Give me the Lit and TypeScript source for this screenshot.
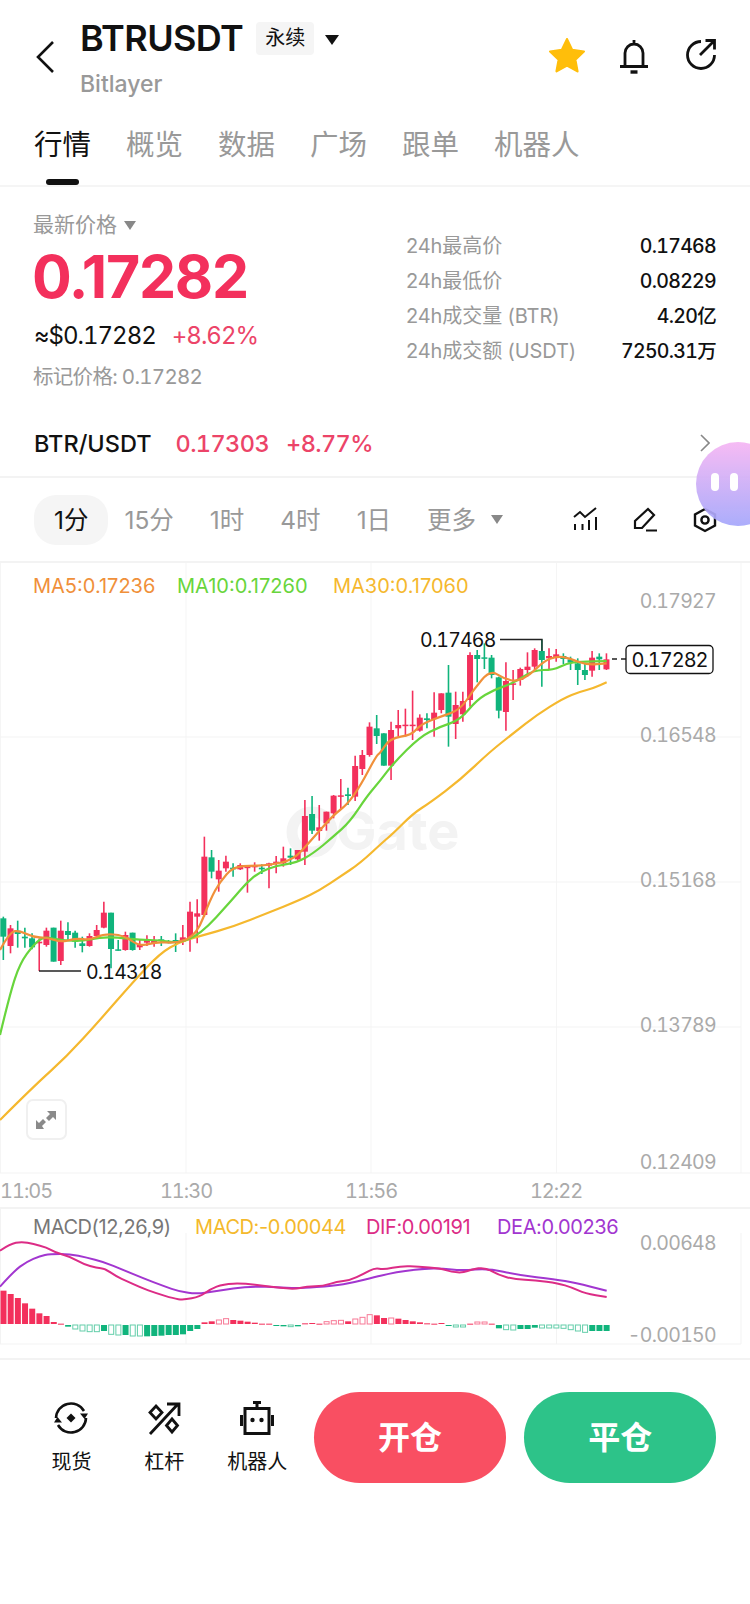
import {LitElement, css, html, svg, unsafeCSS} from "lit";
import {customElement} from "lit/decorators.js";

const RED = "#f3305c";
const GREEN = "#10b47c";
const MA5 = "#f0903a";
const MA10 = "#68d53c";
const MA30 = "#f5b82e";
const DIF = "#dc2c86";
const DEA = "#a236d0";

type Pt = [number, number];
// kind, body top, body bottom, wick top, wick bottom
type Candle = ["r" | "g", number, number, number, number];

/** Zoomed-in chart readings back to page pixels. */
const at =
	(ox: number, oy: number) =>
	(pts: Pt[]): Pt[] =>
		pts.map(([x, y]) => [ox + x / 3, oy + y / 3]);

const seg = (oy: number, rows: Candle[]): Candle[] =>
	rows.map(([k, a, b, c, d]) => [k, oy + a / 3, oy + b / 3, oy + c / 3, oy + d / 3]);

const candles: Candle[] = [
	...seg(860, [
		["g", 175, 230, 170, 300],
		["r", 205, 258, 195, 280],
		["g", 212, 222, 182, 263],
		["g", 230, 235, 203, 263],
		["g", 235, 262, 220, 268],
		["r", 245, 250, 235, 333],
		["r", 212, 255, 203, 260],
		["g", 203, 305, 203, 305],
		["r", 212, 303, 182, 315],
		["g", 213, 225, 187, 240],
		["g", 218, 245, 212, 263],
		["g", 250, 258, 230, 277],
		["r", 228, 258, 220, 260],
		["r", 210, 228, 195, 232],
		["r", 158, 203, 125, 205],
		["g", 158, 267, 158, 325],
		["g", 268, 272, 240, 272],
		["r", 225, 270, 215, 272],
		["g", 218, 270, 218, 272],
		["r", 253, 262, 240, 270],
		["r", 240, 248, 226, 258],
		["r", 240, 250, 228, 260],
		["g", 238, 243, 228, 258],
		["g", 245, 247, 240, 250],
		["g", 240, 245, 220, 276],
		["r", 232, 245, 195, 255],
		["r", 155, 235, 125, 275],
		["r", 160, 170, 118, 250],
	]),
	...seg(700, [
		["r", 470, 645, 410, 650],
		["g", 472, 515, 450, 535],
		["r", 512, 538, 480, 575],
		["r", 485, 505, 467, 515],
		["g", 503, 508, 490, 530],
		["r", 495, 508, 490, 510],
		["r", 500, 503, 500, 578],
		["r", 497, 502, 487, 515],
		["g", 503, 508, 493, 522],
		["r", 490, 497, 488, 565],
		["r", 485, 490, 468, 520],
		["r", 475, 490, 440, 500],
		["g", 467, 473, 445, 495],
		["r", 450, 478, 450, 482],
		["r", 348, 455, 300, 495],
		["g", 342, 392, 288, 402],
		["r", 382, 393, 315, 422],
		["r", 335, 370, 335, 392],
		["r", 287, 340, 285, 355],
		["r", 286, 290, 237, 328],
		["g", 283, 288, 263, 315],
		["r", 198, 290, 167, 303],
		["r", 165, 207, 150, 225],
		["r", 80, 165, 67, 170],
		["g", 85, 108, 45, 132],
	]),
	...seg(620, [
		["g", 340, 437, 340, 437],
		["r", 330, 437, 305, 480],
		["r", 315, 325, 270, 350],
		["r", 314, 316, 266, 350],
		["r", 314, 316, 212, 360],
		["r", 293, 332, 283, 335],
		["g", 295, 300, 280, 325],
		["r", 278, 297, 217, 350],
		["r", 220, 270, 220, 280],
		["g", 218, 290, 135, 380],
		["r", 255, 312, 215, 357],
		["r", 243, 283, 215, 305],
		["r", 105, 240, 97, 260],
		["g", 105, 117, 90, 187],
		["g", 112, 116, 70, 147],
		["g", 113, 165, 105, 175],
		["g", 172, 272, 170, 295],
		["r", 183, 276, 127, 332],
		["r", 190, 193, 150, 240],
		["r", 147, 180, 143, 197],
		["r", 140, 150, 97, 170],
		["r", 90, 140, 85, 150],
		["g", 93, 120, 58, 200],
		["r", 108, 115, 85, 150],
		["r", 103, 112, 87, 125],
		["g", 108, 117, 100, 132],
		["g", 118, 128, 110, 150],
		["g", 130, 150, 115, 195],
		["g", 150, 165, 130, 180],
		["r", 113, 152, 93, 170],
		["g", 110, 118, 100, 150],
		["r", 118, 148, 100, 150],
	]),
];

const low = at(0, 860);
const mid = at(170, 700);
const top = at(380, 620);

const ma30Line: Pt[] = [
	...low([[0, 780], [100, 680], [200, 590], [300, 480], [400, 365], [480, 280], [540, 245], [600, 228], [700, 200], [800, 160], [900, 120]]),
	...mid([[450, 570], [510, 530], [570, 490], [640, 425]]),
	...top([[40, 640], [100, 580], [150, 548], [240, 480], [330, 395], [400, 340], [470, 285], [550, 235], [600, 215], [640, 205], [680, 187]]),
];
const ma10Line: Pt[] = [
	...low([[0, 525], [30, 400], [60, 310], [100, 255], [130, 230], [170, 238], [240, 245], [300, 232], [350, 232], [420, 240], [480, 240], [530, 250], [600, 225]]),
	...mid([[186, 600], [230, 548], [270, 515], [320, 497], [380, 488], [430, 460], [490, 410], [540, 365], [590, 290]]),
	...top([[0, 483], [40, 430], [120, 350], [180, 320], [240, 300], [290, 240], [340, 210], [400, 190], [460, 150], [520, 150], [560, 130], [600, 125], [680, 123]]),
];
const ma5Line: Pt[] = [
	...low([[0, 270], [30, 215], [60, 212], [100, 232], [140, 232], [180, 247], [230, 235], [270, 240], [310, 222], [370, 225], [420, 260], [470, 245], [530, 250], [590, 225]]),
	...mid([[120, 600], [150, 545], [190, 500], [250, 497], [300, 495], [370, 480], [420, 425], [490, 345], [530, 315], [570, 260], [620, 165]]),
	...top([[0, 400], [30, 355], [95, 345], [120, 315], [180, 290], [240, 270], [280, 210], [330, 150], [370, 175], [410, 185], [450, 165], [490, 125], [530, 108], [570, 115], [620, 135], [680, 130]]),
];

const macdTop = at(0, 1200);
const macdRest = at(375, 1200);
const difLine: Pt[] = [
	...macdTop([[0, 152], [30, 132], [65, 125], [100, 132], [140, 142], [165, 157], [210, 170], [250, 192], [290, 204], [315, 206], [350, 230], [380, 243], [420, 262], [470, 280], [520, 295], [550, 300], [600, 290], [630, 268], [670, 252], [730, 250], [800, 259], [880, 268], [920, 260], [970, 258], [1010, 245], [1050, 241], [1090, 222]]),
	...macdRest([[0, 203], [25, 209], [80, 198], [130, 200], [195, 205], [230, 216], [265, 218], [290, 208], [330, 202], [370, 225], [420, 238], [480, 240], [550, 250], [590, 262], [630, 280], [695, 291]]),
];
const deaLine: Pt[] = [
	...macdTop([[0, 260], [40, 215], [80, 185], [120, 168], [150, 162], [210, 162], [260, 173], [310, 185], [370, 210], [430, 235], [490, 258], [540, 275], [590, 282], [650, 273], [750, 258], [850, 263], [900, 265], [1000, 257], [1060, 248]]),
	...macdRest([[0, 231], [40, 222], [90, 212], [150, 206], [200, 205], [260, 212], [340, 205], [430, 225], [540, 238], [600, 248], [695, 272]]),
];

// histogram height in zoomed px (sign: up is red), second value = hollow
const hist: [number, boolean?][] = [
	[100], [90], [78], [62], [46], [32], [24], [6], [1], [-5], [-12, true], [-18, true], [-20, true], [-20, true], [-18], [-28, true], [-30, true], [-30], [-33, true], [-33, true], [-34], [-33], [-32], [-30], [-30], [-28], [-18], [-12],
	[5], [8], [12, true], [16, true], [12], [10], [7], [4], [1], [1], [-3], [-4], [-5, true], [-4], [2], [3], [1], [7, true], [10, true], [11, true], [8], [15, true], [20, true], [28, true],
	[26], [18], [18, true], [16], [12], [8], [5], [2], [1], [3], [-3], [-6, true], [-6, true], [1], [6, true], [6, true], [1], [-10], [-14, true], [-15, true], [-12], [-12], [-8], [-9, true], [-9, true], [-9, true], [-10, true], [-14, true], [-18, true], [-22, true], [-18], [-18], [-18],
];

/** Midpoint-smoothed path through the readings. */
const smooth = (pts: Pt[]) => {
	let d = `M${pts[0][0]} ${pts[0][1]}`;
	for (let i = 1; i < pts.length - 1; i++) {
		const mx = (pts[i][0] + pts[i + 1][0]) / 2;
		const my = (pts[i][1] + pts[i + 1][1]) / 2;
		d += `Q${pts[i][0]} ${pts[i][1]} ${mx} ${my}`;
	}
	const end = pts[pts.length - 1];
	return d + `L${end[0]} ${end[1]}`;
};

const stats = [
	["24h最高价", "0.17468"],
	["24h最低价", "0.08229"],
	["24h成交量 (BTR)", "4.20亿"],
	["24h成交额 (USDT)", "7250.31万"],
];

@customElement("app-root")
export class AppRoot extends LitElement {
	static styles = css`
		:host {
			display: block;
			position: relative;
			width: 750px;
			height: 1604px;
			overflow: hidden;
			background: #fff;
			color: #111;
			font-family: Inter, "Noto Sans CJK SC", sans-serif;
		}

		svg {
			display: block;
		}

		.header {
			display: flex;
			height: 110px;
			padding: 0 33px 0 36px;
			box-sizing: border-box;
		}

		.back {
			margin: 41px 26px 0 0;
		}

		.names {
			flex: 1;
			padding-top: 20px;
		}

		.title-row {
			display: flex;
			align-items: center;
			height: 36px;
		}

		.title {
			font-size: 36px;
			font-weight: 600;
			letter-spacing: -0.6px;
			line-height: 36px;
		}

		.badge {
			margin-left: 13px;
			padding: 0 9px;
			height: 33px;
			line-height: 33px;
			border-radius: 4px;
			background: #f5f5f5;
			font-size: 20px;
		}

		.drop {
			margin: 4px 0 0 11px;
			border-style: solid;
			border-width: 10px 7px 0;
			border-color: #111 transparent transparent;
		}

		.chain {
			margin-top: 13px;
			color: #999;
			font-size: 23px;
			font-weight: 500;
			line-height: 30px;
		}

		.actions {
			display: flex;
			gap: 33px;
			padding-top: 38px;
			align-items: flex-start;
		}

		.bell {
			margin-right: 2px;
		}

		.tabs {
			display: flex;
			gap: 35px;
			padding: 15px 34px 0;
			border-bottom: 2px solid #f5f5f5;
		}

		.tab {
			display: flex;
			flex-direction: column;
			align-items: center;
			color: #999;
			font-size: 28.5px;
			line-height: 40px;
		}

		.tab.on {
			color: #111;
		}

		.tab i {
			width: 33px;
			height: 6px;
			margin-top: 14px;
			border-radius: 3px;
		}

		.tab.on i {
			background: #111;
		}

		.overview {
			display: flex;
			justify-content: space-between;
			padding: 24px 34px 0;
		}

		.price-label {
			display: flex;
			align-items: center;
			margin-left: -1px;
			color: #999;
			font-size: 21px;
			line-height: 28px;
		}

		.small-drop {
			margin-left: 7px;
			border-style: solid;
			border-width: 9px 6.5px 0;
			border-color: #888 transparent transparent;
		}

		.price {
			margin: 4px 0 0 -2px;
			color: ${unsafeCSS(RED)};
			font-size: 59px;
			font-weight: 700;
			letter-spacing: -1.3px;
			line-height: 68px;
		}

		.fiat {
			display: flex;
			gap: 16px;
			margin-top: 10px;
			font-size: 24px;
			font-variant-numeric: tabular-nums;
			letter-spacing: -1px;
			line-height: 30px;
		}

		.up {
			color: #ec4468;
		}

		.mark {
			margin: 12px 0 0 -1px;
			color: #999;
			font-size: 20.5px;
			font-variant-numeric: tabular-nums;
			letter-spacing: -0.7px;
			line-height: 28px;
		}

		.stats {
			width: 310px;
			margin-top: 18px;
		}

		.stat {
			display: flex;
			justify-content: space-between;
			font-size: 20px;
			line-height: 35px;
		}

		.stat span {
			color: #999;
			letter-spacing: -0.1px;
		}

		.stat b {
			font-size: 19.5px;
			font-variant-numeric: tabular-nums;
			font-weight: 500;
			letter-spacing: -0.7px;
		}

		.pair {
			display: flex;
			align-items: center;
			height: 60px;
			margin: 22px 0 3px;
			padding: 0 40px 0 34px;
			font-size: 23.5px;
			font-weight: 500;
		}

		.pair .up {
			font-variant-numeric: tabular-nums;
			letter-spacing: -0.6px;
		}

		.pair-price {
			margin-left: 24px;
		}

		.pair-change {
			margin-left: 17px;
			flex: 1;
		}

		.frames {
			display: flex;
			align-items: center;
			height: 87px;
			padding: 0 33px 0 34px;
			box-sizing: border-box;
			border-top: 2px solid #f3f3f3;
			border-bottom: 2px solid #f3f3f3;
		}

		.frame {
			padding: 0 18px;
			color: #999;
			font-size: 24.5px;
			line-height: 50px;
		}

		.frame.on {
			margin-right: -2px;
			padding: 0 20px;
			border-radius: 22px;
			background: #f5f5f5;
			color: #111;
		}

		.more {
			display: flex;
			align-items: center;
			gap: 8px;
		}

		.tools {
			display: flex;
			gap: 36px;
			margin-left: auto;
		}

		.macd {
			border-top: 2px solid #f3f3f3;
			border-bottom: 2px solid #f3f3f3;
		}

		.axis {
			fill: #aaa;
			font-size: 19.5px;
			font-variant-numeric: tabular-nums;
			letter-spacing: -0.7px;
		}

		.time {
			fill: #aaa;
			font-size: 20px;
			font-variant-numeric: tabular-nums;
			letter-spacing: -1px;
		}

		.legend {
			font-size: 20px;
		}

		.legend.tight {
			letter-spacing: -0.4px;
		}

		.mark-label {
			fill: #111;
			font-size: 19.5px;
			font-variant-numeric: tabular-nums;
			letter-spacing: -0.8px;
		}

		.last {
			fill: #111;
			font-size: 20px;
			font-variant-numeric: tabular-nums;
			letter-spacing: -1px;
		}

		.wm {
			fill: #f3f3f3;
			font-size: 54px;
			font-weight: 700;
		}

		.bottom {
			display: flex;
			padding: 32px 34px 0 25px;
		}

		.tool {
			display: flex;
			flex-direction: column;
			align-items: center;
			width: 93px;
			padding-top: 8px;
			font-size: 20px;
			line-height: 28px;
		}

		.tool span {
			margin-top: 12px;
		}

		.trade {
			width: 193px;
			height: 91px;
			border-radius: 46px;
			color: #fff;
			font-size: 32px;
			font-weight: 700;
			line-height: 91px;
			text-align: center;
		}

		.open {
			margin-left: 10px;
			background: #f94f62;
		}

		.close {
			width: 192px;
			margin-left: 18px;
			background: #2dc389;
		}

		.bubble {
			position: absolute;
			top: 442px;
			left: 696px;
			display: flex;
			gap: 11px;
			width: 84px;
			height: 84px;
			padding: 31px 0 0 15px;
			box-sizing: border-box;
			border-radius: 50%;
			background: linear-gradient(#f6b6f4, #a4a6fb);
			opacity: 0.92;
		}

		.bubble i {
			width: 8px;
			height: 18px;
			border-radius: 4px;
			background: #fff;
		}
	`;

	private chartLayer() {
		const gridX = [0.5, 186, 371, 556.5, 741];
		const gridY = [737, 882, 1027];
		return svg`
			${gridX.map((x) => svg`<line x1=${x} x2=${x} y1="563" y2="1173" stroke="#f5f5f5" stroke-width="1"></line>`)}
			${gridY.map((y) => svg`<line x1="0" x2="741" y1=${y} y2=${y} stroke="#f3f3f3" stroke-width="1"></line>`)}
			<line x1="0" x2="750" y1="1173" y2="1173" stroke="#f3f3f3" stroke-width="1"></line>

			<circle cx="312" cy="832" r="20" fill="none" stroke="#f3f3f3" stroke-width="11"></circle>
			<text class="wm" x="336" y="850">Gate</text>

			${candles.map(([k, a, b, c, d], i) => {
				const x = 3.33 + 7.18 * i;
				const color = k === "r" ? RED : GREEN;
				return svg`
					<line x1=${x} x2=${x} y1=${c} y2=${d} stroke=${color} stroke-width="1.6"></line>
					<rect x=${x - 3} y=${a} width="6" height=${Math.max(b - a, 1.5)} fill=${color}></rect>`;
			})}

			<path d=${smooth(ma30Line)} fill="none" stroke=${MA30} stroke-width="2.2"></path>
			<path d=${smooth(ma10Line)} fill="none" stroke=${MA10} stroke-width="2.2"></path>
			<path d=${smooth(ma5Line)} fill="none" stroke=${MA5} stroke-width="2.2"></path>

			<text class="legend" x="33" y="593" fill=${MA5}>MA5:0.17236</text>
			<text class="legend" x="177" y="593" fill=${MA10}>MA10:0.17260</text>
			<text class="legend" x="333" y="593" fill=${MA30}>MA30:0.17060</text>

			${[["0.17927", 608], ["0.16548", 742], ["0.15168", 887], ["0.13789", 1032], ["0.12409", 1169]].map(
				([t, y]) => svg`<text class="axis" x="716" y=${y} text-anchor="end">${t}</text>`,
			)}
			${[["11:05", 0, "start"], ["11:30", 186, "middle"], ["11:56", 371, "middle"], ["12:22", 556, "middle"]].map(
				([t, x, anchor]) => svg`<text class="time" x=${x} y="1198" text-anchor=${anchor}>${t}</text>`,
			)}

			<path d="M500 639.5H542V651" fill="none" stroke="#222" stroke-width="1.3"></path>
			<text class="mark-label" x="420" y="647">0.17468</text>
			<path d="M39 971H81" fill="none" stroke="#222" stroke-width="1.3"></path>
			<text class="mark-label" x="86" y="979">0.14318</text>

			<path d="M612 659H626" stroke="#222" stroke-width="1.3" stroke-dasharray="5 4"></path>
			<rect x="626" y="645.5" width="87" height="28" rx="4" fill="#fff" stroke="#111" stroke-width="1.3"></rect>
			<text class="last" x="669.5" y="667" text-anchor="middle">0.17282</text>

			<rect x="27" y="1100" width="39" height="39" rx="6" fill="#fff" stroke="#f0f0f0" stroke-width="2"></rect>
			<path d="M47 1111h9v9l-3-3-4 4-3-3 4-4zM44 1129h-8v-9l3 3 4-4 3 3-4 4z" fill="#8a8a8a"></path>
		`;
	}

	private macdLayer() {
		return svg`
			${[186, 371, 556.5, 741].map((x) => svg`<line x1=${x} x2=${x} y1="1233" y2="1344" stroke="#f3f3f3"></line>`)}
			<line x1="0.5" x2="0.5" y1="1209" y2="1344" stroke="#f3f3f3"></line>
			<line x1="0" x2="741" y1="1344" y2="1344" stroke="#f3f3f3"></line>

			<text class="legend tight" x="33" y="1234" fill="#777">MACD(12,26,9)</text>
			<text class="legend tight" x="195" y="1234" fill="#f4b92c">MACD:-0.00044</text>
			<text class="legend tight" x="366" y="1234" fill=${DIF}>DIF:0.00191</text>
			<text class="legend tight" x="497" y="1234" fill=${DEA}>DEA:0.00236</text>
			<text class="axis" x="716" y="1250" text-anchor="end">0.00648</text>
			<text class="axis" x="716" y="1342" text-anchor="end">-0.00150</text>

			${hist.map(([h, hollow], i) => {
				const x = 0.5 + 7.18 * i;
				const ht = Math.abs(h) / 3;
				const y = h > 0 ? 1324 - ht : 1325;
				const color = h > 0 ? RED : GREEN;
				return hollow
					? svg`<rect x=${x + 0.5} y=${y} width="5" height=${ht} fill="#fff" stroke=${color} stroke-opacity="0.65" stroke-width="1"></rect>`
					: svg`<rect x=${x} y=${y} width="6" height=${Math.max(ht, 1)} fill=${color}></rect>`;
			})}

			<path d=${smooth(deaLine)} fill="none" stroke=${DEA} stroke-width="2"></path>
			<path d=${smooth(difLine)} fill="none" stroke=${DIF} stroke-width="2"></path>
		`;
	}

	render() {
		return html`
			<div class="header">
				<svg class="back" width="18" height="32" viewBox="0 0 18 32" fill="none" stroke="#111" stroke-width="2.6">
					<path d="M17 1 2 16l15 15"></path>
				</svg>
				<div class="names">
					<div class="title-row">
						<div class="title">BTRUSDT</div>
						<div class="badge">永续</div>
						<div class="drop"></div>
					</div>
					<div class="chain">Bitlayer</div>
				</div>
				<div class="actions">
					<svg width="36" height="36" viewBox="2 2 32 32">
						<path
							d="M18 3l4.6 9.6 10.4 1.4-7.6 7.2 1.9 10.4-9.3-5.1-9.3 5.1 1.9-10.4L3 14l10.4-1.4z"
							fill="#ffbe0a"
							stroke="#ffbe0a"
							stroke-width="2"
							stroke-linejoin="round"></path>
					</svg>
					<svg class="bell" width="32" height="36" viewBox="0 0 32 36" fill="none" stroke="#111" stroke-width="2.8">
						<path d="M7 28V15a9 9 0 0 1 18 0v13M2 28.5h28M16 2v4"></path>
						<path d="M12.5 34h7" stroke-width="3.4"></path>
					</svg>
					<svg width="32" height="32" viewBox="0 0 32 32" fill="none" stroke="#111" stroke-width="2.8">
						<path d="M16 3.5A13.5 13.5 0 1 0 29.5 17M15 17 29 3M20.5 2.5h9v9"></path>
					</svg>
				</div>
			</div>

			<div class="tabs">
				${["行情", "概览", "数据", "广场", "跟单", "机器人"].map(
					(t, i) => html`<div class="tab ${i === 0 ? "on" : ""}">${t}<i></i></div>`,
				)}
			</div>

			<div class="overview">
				<div>
					<div class="price-label">最新价格<span class="small-drop"></span></div>
					<div class="price">0.17282</div>
					<div class="fiat">≈$0.17282 <span class="up">+8.62%</span></div>
					<div class="mark">标记价格: 0.17282</div>
				</div>
				<div class="stats">
					${stats.map(([k, v]) => html`<div class="stat"><span>${k}</span><b>${v}</b></div>`)}
				</div>
			</div>

			<div class="pair">
				BTR/USDT
				<span class="up pair-price">0.17303</span>
				<span class="up pair-change">+8.77%</span>
				<svg width="10" height="18" viewBox="0 0 10 18" fill="none" stroke="#888" stroke-width="1.6">
					<path d="M1 1l8 8-8 8"></path>
				</svg>
			</div>

			<div class="frames">
				<div class="frame on">1分</div>
				<div class="frame">15分</div>
				<div class="frame">1时</div>
				<div class="frame">4时</div>
				<div class="frame">1日</div>
				<div class="frame more">更多<span class="small-drop"></span></div>
				<div class="tools">
					<svg width="24" height="24" viewBox="0 0 24 24" fill="none" stroke="#111" stroke-width="2">
						<path d="M1 10l6-5 5 5L23 1M2 17v6M9.5 17v6M16 13v10M23 10v13"></path>
					</svg>
					<svg width="24" height="25" viewBox="0 0 24 25" fill="none" stroke="#111" stroke-width="2.2">
						<path d="M15 2l6 6L9 21H2v-7zM13 23.5h11"></path>
					</svg>
					<svg width="24" height="26" viewBox="0 0 24 26" fill="none" stroke="#111" stroke-width="2.4">
						<path d="M12 2l10 5.5v11L12 24 2 18.5v-11z"></path>
						<circle cx="12" cy="13" r="3.6"></circle>
					</svg>
				</div>
			</div>

			<svg width="750" height="644" viewBox="0 563 750 644">${this.chartLayer()}</svg>

			<div class="macd">
				<svg width="750" height="149" viewBox="0 1209 750 149">${this.macdLayer()}</svg>
			</div>

			<div class="bottom">
				<div class="tool">
					<svg width="36" height="36" viewBox="0 0 36 36" fill="none" stroke="#111" stroke-width="2.6">
						<path d="M3 18a15 15 0 0 1 28-7M33 18a15 15 0 0 1-28 7"></path>
						<path d="M31.5 19 35 13.5h-8zM4.5 17 1 22.5h8z" fill="#111" stroke="none"></path>
						<path d="M18 13.5l4.5 4.5-4.5 4.5-4.5-4.5z" fill="#111" stroke="none"></path>
					</svg>
					<span>现货</span>
				</div>
				<div class="tool">
					<svg width="36" height="36" viewBox="0 0 36 36" fill="none" stroke="#111" stroke-width="2.8">
						<path d="M4 34 32 4M21 4h12v12"></path>
						<path d="M10 6l6 6.5-6 6.5-6-6.5zM26 19l5.5 6.5L26 32l-5.5-6.5z"></path>
					</svg>
					<span>杠杆</span>
				</div>
				<div class="tool">
					<svg width="36" height="36" viewBox="0 0 36 36" fill="none" stroke="#111" stroke-width="3">
						<path d="M14 2.5h8M6 8.5h24v25H6zM18 3v5M2.5 15v11M33.5 15v11"></path>
						<circle cx="13.5" cy="20" r="2.2" fill="#111" stroke="none"></circle>
						<circle cx="22.5" cy="20" r="2.2" fill="#111" stroke="none"></circle>
					</svg>
					<span>机器人</span>
				</div>
				<div class="trade open">开仓</div>
				<div class="trade close">平仓</div>
			</div>

			<div class="bubble"><i></i><i></i></div>
		`;
	}
}
